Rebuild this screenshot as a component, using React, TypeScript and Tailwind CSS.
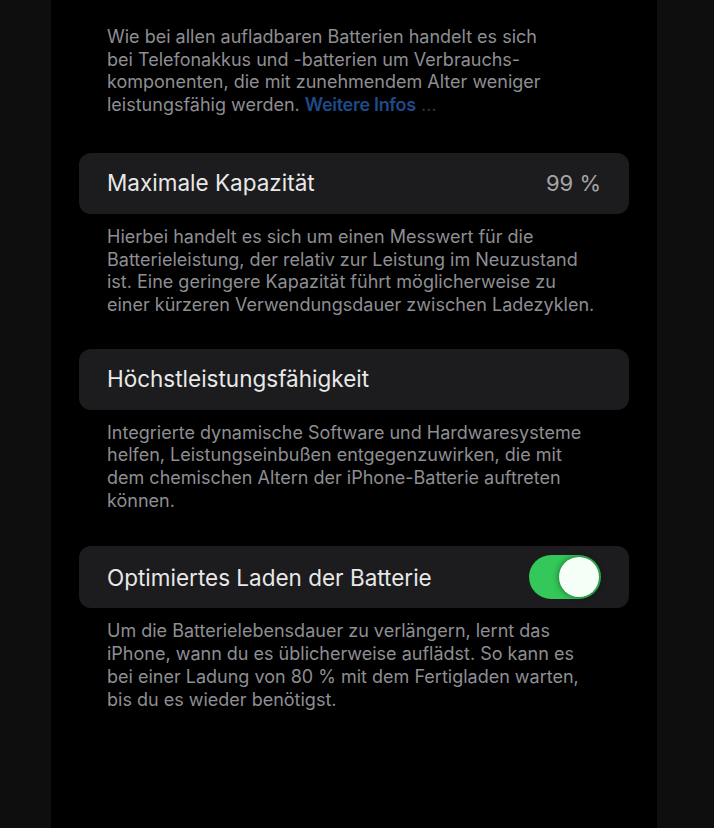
import React from "react";

const font = { fontFamily: "Inter, 'Noto Sans', sans-serif" };

const Note = ({ lines }: { lines: React.ReactNode[] }) => (
  <p className="px-[28px] text-[18px] leading-[22.7px] text-[#8e8e93] whitespace-nowrap">
    {lines.map((l, i) => (
      <React.Fragment key={i}>
        {l}
        {i < lines.length - 1 && <br />}
      </React.Fragment>
    ))}
  </p>
);

const Toggle = () => (
  <div className="w-[72px] h-[44px] rounded-full bg-[#34c759] p-[2px] flex justify-end">
    <div className="w-[40px] h-[40px] rounded-full bg-[#f5fff8] shadow-[0_0_6px_rgba(0,0,0,0.5)]" />
  </div>
);

export default function App() {
  return (
    <div className="min-h-[828px] bg-[#0e0e0e] pl-[51px]" style={font}>
      <div className="w-[606px] min-h-[828px] bg-black px-[28px] pt-[26px] pb-10">
        <Note
          lines={[
            "Wie bei allen aufladbaren Batterien handelt es sich",
            "bei Telefonakkus und -batterien um Verbrauchs-",
            "komponenten, die mit zunehmendem Alter weniger",
            <>
              leistungsfähig werden.{" "}
              <span className="text-[#1f4a8a] font-semibold tracking-[-0.3px]">Weitere Infos</span>{" "}
              <span className="text-[#3a3a3c]">…</span>
            </>,
          ]}
        />

        <div className="mt-[36px] h-[61px] rounded-[12px] bg-[#1c1c1e] px-[28px] flex items-center justify-between">
          <span className="text-[22.5px] text-[#e8e8e8]">Maximale Kapazität</span>
          <span className="text-[22px] text-[#a5a5a5]">99 %</span>
        </div>
        <div className="mt-[12px]">
          <Note
            lines={[
              "Hierbei handelt es sich um einen Messwert für die",
              "Batterieleistung, der relativ zur Leistung im Neuzustand",
              "ist. Eine geringere Kapazität führt möglicherweise zu",
              "einer kürzeren Verwendungsdauer zwischen Ladezyklen.",
            ]}
          />
        </div>

        <div className="mt-[32px] h-[61px] rounded-[12px] bg-[#1c1c1e] px-[28px] flex items-center">
          <span className="text-[22.5px] text-[#e8e8e8]">Höchstleistungsfähigkeit</span>
        </div>
        <div className="mt-[12px]">
          <Note
            lines={[
              "Integrierte dynamische Software und Hardwaresysteme",
              "helfen, Leistungseinbußen entgegenzuwirken, die mit",
              "dem chemischen Altern der iPhone-Batterie auftreten",
              "können.",
            ]}
          />
        </div>

        <div className="mt-[34px] h-[62px] rounded-[12px] bg-[#1c1c1e] px-[28px] flex items-center justify-between">
          <span className="text-[22.5px] text-[#e8e8e8]">Optimiertes Laden der Batterie</span>
          <Toggle />
        </div>
        <div className="mt-[12px]">
          <Note
            lines={[
              "Um die Batterielebensdauer zu verlängern, lernt das",
              "iPhone, wann du es üblicherweise auflädst. So kann es",
              "bei einer Ladung von 80 % mit dem Fertigladen warten,",
              "bis du es wieder benötigst.",
            ]}
          />
        </div>
      </div>
    </div>
  );
}
